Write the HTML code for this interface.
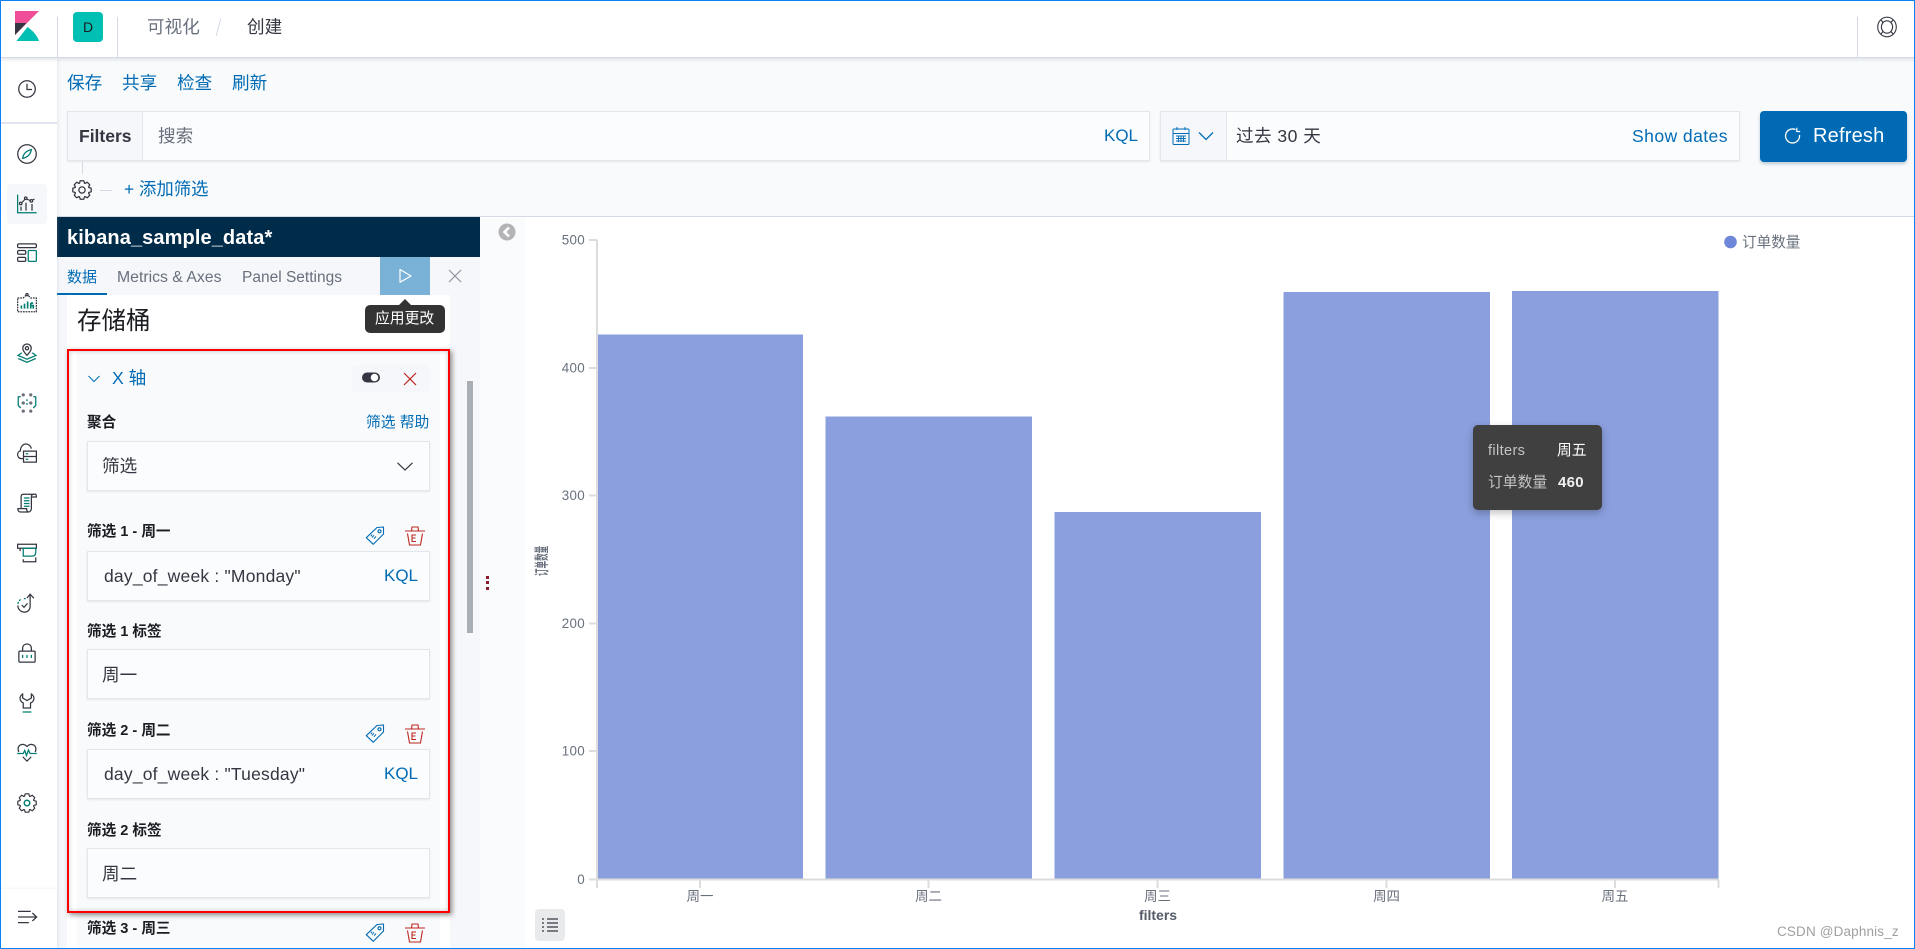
<!DOCTYPE html>
<html lang="zh">
<head>
<meta charset="utf-8">
<title>可视化 - 创建</title>
<style>
*{box-sizing:border-box}
html,body{margin:0;padding:0;width:1915px;height:949px;overflow:hidden;background:#fff;font-family:"Liberation Sans","Noto Sans CJK SC",sans-serif;color:#343741}
.a{position:absolute}
.t{position:absolute;white-space:nowrap;line-height:24px;height:24px}
.blue{color:#006bb4}
.b{font-weight:700}
.lbl{font-size:14.6px;font-weight:700;color:#1a1c21}
.inp{position:absolute;left:87px;width:343px;background:#fbfcfd;border:1px solid #e3e6ec;box-shadow:0 1px 2px rgba(0,0,0,.07)}
.i{position:absolute;left:17px;width:20px;height:20px;fill:none;stroke:#343741;stroke-width:1}
.g{stroke:#017d73}
svg{overflow:visible}
</style>
</head>
<body>
<!-- top bar backgrounds -->
<div class="a" style="left:0;top:0;width:1915px;height:58px;background:#fff;border-bottom:1px solid #d3dae6;box-shadow:0 2px 3px rgba(152,162,179,.25);z-index:3"></div>
<div class="a" style="left:57px;top:58px;width:1858px;height:159px;background:#f9fafc;border-bottom:1px solid #d3dae6"></div>

<!-- header content -->
<div style="position:absolute;left:0;top:0;width:1915px;height:57px;z-index:4">
<svg class="a" style="left:15px;top:11px" width="24" height="30" viewBox="0 0 24 30">
<polygon points="0,0 24,0 0,24" fill="#f04e98"/>
<polygon points="0,12 11.500,12 0,24" fill="#343741"/>
<path d="M1.500,30 L12.500,16 C17,19 22,24 24,30 Z" fill="#00bfb3"/>
</svg>
<div class="a" style="left:57px;top:17px;width:1px;height:40px;background:#d3dae6"></div>
<div class="a" style="left:117px;top:17px;width:1px;height:40px;background:#d3dae6"></div>
<div class="a" style="left:73px;top:12px;width:30px;height:30px;background:#00bfb3;border-radius:4px;color:#1a1c21;font-size:14px;line-height:30px;text-align:center">D</div>
<div class="t" style="left:147px;top:15px;font-size:17.6px;color:#69707d">可视化</div>
<div class="a" style="left:218px;top:18px;width:1px;height:18px;background:#d3dae6;transform:rotate(15deg)"></div>
<div class="t" style="left:247px;top:15px;font-size:17.6px;color:#343741">创建</div>
<div class="a" style="left:1857px;top:17px;width:1px;height:40px;background:#d3dae6"></div>
<svg class="a" style="left:1877px;top:16px;fill:none;stroke:#343741;stroke-width:1.1" width="20" height="22" viewBox="0 0 20 22">
<ellipse cx="10" cy="11" rx="9.300" ry="9.800"/><ellipse cx="10" cy="11" rx="5.600" ry="6.200"/>
<path d="M4,4 L6,6.500 M16,4 L14,6.500 M4,18 L6,15.500 M16,18 L14,15.500"/>
</svg>
</div>

<!-- nav links -->
<div class="t blue" style="left:67px;top:71px;font-size:17.6px">保存</div>
<div class="t blue" style="left:122px;top:71px;font-size:17.6px">共享</div>
<div class="t blue" style="left:177px;top:71px;font-size:17.6px">检查</div>
<div class="t blue" style="left:232px;top:71px;font-size:17.6px">刷新</div>

<!-- search -->
<div class="a" style="left:67px;top:111px;width:1083px;height:50px;background:#fbfcfd;border:1px solid #e3e6ec;box-shadow:0 1px 2px rgba(0,0,0,.07)"></div>
<div class="a" style="left:68px;top:112px;width:75px;height:48px;background:#f5f7fa;border-right:1px solid #e3e6ec"></div>
<div class="t b" style="left:79px;top:124px;font-size:17.5px;color:#343741">Filters</div>
<div class="t" style="left:158px;top:124px;font-size:17.6px;color:#69707d">搜索</div>
<div class="t blue" style="left:1104px;top:124px;font-size:17px">KQL</div>

<!-- date -->
<div class="a" style="left:1160px;top:111px;width:580px;height:50px;background:#fbfcfd;border:1px solid #e3e6ec;box-shadow:0 1px 2px rgba(0,0,0,.07)"></div>
<div class="a" style="left:1161px;top:112px;width:66px;height:48px;background:#f5f7fa;border-right:1px solid #e3e6ec"></div>
<svg class="a" style="left:1172px;top:126px;fill:none;stroke:#006bb4;stroke-width:1" width="18" height="20" viewBox="0 0 18 20">
<rect x="1" y="3" width="16" height="15.500" rx="1"/><path d="M1,7.500H17M5,1V4M13,1V4"/>
<path d="M4,10H14M4,12.500H14M4,15H14M6.500,9.500V16M9,9.500V16M11.500,9.500V16" stroke-width=".9"/>
</svg>
<svg class="a" style="left:1198px;top:131px;fill:none;stroke:#006bb4;stroke-width:1.3" width="16" height="10" viewBox="0 0 16 10"><path d="M1,1.500L8,8.500L15,1.500"/></svg>
<div class="t" style="left:1236px;top:124px;font-size:17.600px;color:#343741;letter-spacing:.45px">过去 30 天</div>
<div class="t blue" style="left:1632px;top:124px;font-size:17.600px;letter-spacing:.4px">Show dates</div>

<!-- refresh -->
<div class="a" style="left:1760px;top:111px;width:147px;height:51px;background:#006bb4;border-radius:4px;box-shadow:0 2px 3px rgba(0,60,100,.25)"></div>
<svg class="a" style="left:1784px;top:127px;fill:none;stroke:#fff;stroke-width:1.3" width="18" height="18" viewBox="0 0 18 18"><path d="M11.500,2.600A7,7 0 1 0 15.500,8"/><path d="M12.800,.8V4.500H16.200" stroke-width="1.2"/></svg>
<div class="t" style="left:1813px;top:124px;font-size:20px;color:#fff;letter-spacing:.2px">Refresh</div>

<!-- filter row -->
<div class="a" style="left:82px;top:161px;width:1px;height:13px;background:#d3dae6"></div>
<svg class="a" style="left:72px;top:180px;fill:none;stroke:#343741;stroke-width:1" width="20" height="20" viewBox="0 0 16 16">
<polygon points="15.360,9.430 13.450,9.980 13.260,10.450 14.220,12.190 12.190,14.220 10.450,13.260 9.980,13.450 9.430,15.360 6.570,15.360 6.020,13.450 5.550,13.260 3.810,14.220 1.780,12.190 2.740,10.450 2.550,9.980 .64,9.430 .64,6.570 2.550,6.020 2.740,5.550 1.780,3.810 3.810,1.780 5.550,2.740 6.020,2.550 6.570,.64 9.430,.64 9.980,2.550 10.450,2.740 12.190,1.780 14.220,3.810 13.260,5.550 13.450,6.020 15.360,6.570" stroke-linejoin="round"/><circle cx="8" cy="8" r="2.500"/>
</svg>
<div class="a" style="left:100px;top:190px;width:12px;height:1px;background:#d3dae6"></div>
<div class="t blue" style="left:124px;top:177px;font-size:17.400px">+ 添加筛选</div>

<!-- sidebar -->
<div class="a" style="left:1px;top:58px;width:56px;height:891px;background:#fff;box-shadow:1px 0 3px rgba(152,162,179,.22);z-index:2"></div>
<div style="position:absolute;left:0;top:0;z-index:3">
<div class="a" style="left:1px;top:122px;width:56px;height:2px;background:#dfe4ee"></div>
<div class="a" style="left:7px;top:184px;width:40px;height:40px;background:#f5f7fa;border-radius:4px"></div>
<div class="a" style="left:1px;top:889px;width:56px;height:59px;background:#fff;box-shadow:0 -1px 2px rgba(152,162,179,.12)"></div>

<svg class="i" style="top:79px" viewBox="0 0 16 16"><circle cx="8" cy="8" r="6.600"/><path d="M8,3.800V8.400H12"/></svg>
<svg class="i" style="top:144px" viewBox="0 0 16 16"><circle cx="8" cy="8" r="7.400"/><path d="M11.500,4.500C11,7.500 9,10.500 4.500,11.500C5,8 7,5.500 11.500,4.500Z" class="g"/></svg>
<svg class="i" style="top:194px" viewBox="0 0 16 16"><path class="g" d="M.5,.5V15H15.700"/><path d="M3,7.800L7,3.600L11,5.500L14,4" stroke-width=".9"/><circle cx="3" cy="7.600" r="1" fill="#fff"/><circle cx="7" cy="3.400" r="1" fill="#fff"/><circle cx="11.500" cy="5.500" r="1" fill="#fff"/><path d="M3.200,10V13.300M7.200,7V13.300M12,8V13.300"/></svg>
<svg class="i" style="top:243px" viewBox="0 0 16 16"><rect x=".5" y=".7" width="15" height="3" rx="1"/><rect x=".5" y="6" width="6.500" height="3" rx="1"/><rect x=".5" y="11.500" width="6.500" height="3.200" rx="1"/><rect class="g" x="9" y="6" width="6.500" height="8.700" rx=".8"/></svg>
<svg class="i" style="top:293px" viewBox="0 0 16 16"><path d="M.5,4H5L8,1L11,4H15.500V15H.5Z" stroke-dasharray="1.400 .7"/><circle cx="8" cy="1.300" r=".9" fill="#fff"/><path class="g" d="M3.500,12.500V10M6,12.500V8.500M8.500,12.500V6.800M11,12.500V8M13,12.500V10H11M13,8H11" stroke-width="1.300"/></svg>
<svg class="i" style="top:343px" viewBox="0 0 16 16"><path d="M8,9.800C6,7.800 4.600,6.200 4.600,4.200A3.400,3.400 0 0 1 11.400,4.200C11.400,6.200 10,7.800 8,9.800Z"/><circle cx="8" cy="4.200" r="1.300"/><path class="g" d="M3.800,7.800L.8,10L8,13L15.200,10L12.200,7.800M1,12.400L8,15.500L15,12.400"/></svg>
<svg class="i" style="top:393px" viewBox="0 0 16 16"><g fill="#6b707b" stroke="none"><circle cx="5" cy="1.500" r="1.300"/><circle cx="11" cy="1.500" r="1.300"/><circle cx="5" cy="8" r="1.300"/><circle cx="11" cy="8" r="1.300"/><circle cx="5" cy="14.500" r="1.300"/><circle cx="11" cy="14.500" r="1.300"/></g><path class="g" d="M3,3H1V10L3,12M13,3H15V10L13,12"/><path class="g" d="M8,5V10" stroke-dasharray="1.500 1.500"/></svg>
<svg class="i" style="top:443px" viewBox="0 0 16 16"><path d="M5,12.500H3.500C1.500,12.500 .5,10.800 .5,9.200C.5,7.500 1.700,6.500 2.700,6.300C2.700,3 5,.8 7,.8C9.200,.8 11,2.300 11.500,4.500"/><rect x="5.200" y="6.500" width="10.300" height="8.800"/><path d="M5.200,10.800H15.500"/><path class="g" d="M7,8.600H9M7,13H9"/></svg>
<svg class="i" style="top:493px" viewBox="0 0 16 16"><path d="M15.500,1H5C3.800,1 3.300,2 3.300,3V12.500M3.300,12.500H.7C.7,14.200 1.500,15.200 3,15.200H9.200C10.500,15.200 11.500,14 11.500,12.500V3C11.500,2 12,1 13.500,1H14.500C15.200,1 15.500,1.700 15.500,3.200H12M3.300,12.500H7.700C7.700,14 8.300,15 9.300,15.200"/><path class="g" d="M5.500,4H10M5.500,6.200H10M5.500,8.400H10M5.500,10.600H10"/></svg>
<svg class="i" style="top:543px" viewBox="0 0 16 16"><path d="M.5,1H15.500V4.200H.5ZM2.500,4.200V6.500"/><path class="g" d="M5,4.200H15V7.500C15,9.500 13.800,10.500 12,10.500H5Z"/><path d="M5,13V15H15V11.500"/></svg>
<svg class="i" style="top:593px" viewBox="0 0 16 16"><path d="M10.500,1.500L10.500,10.500C10.500,13.500 8.500,15.300 6,15.300C3,15.300 .7,13 .7,10"/><path d="M8,4L10.500,1L13.500,4.200"/><path class="g" d="M.7,8.800C1,7 2.200,5.300 3.500,4.900" stroke-dasharray="1.700 1"/><path class="g" d="M5.500,4.500H7"/><path d="M3.800,9.600L5.600,11.500L8.400,8.300"/></svg>
<svg class="i" style="top:643px" viewBox="0 0 16 16"><path d="M4.500,6.500V4.500C4.500,2 6,.8 8,.8C10,.8 11.500,2 11.500,4.500V6.500"/><rect x="1.500" y="6.500" width="13" height="8.800" rx=".8"/><path class="g" d="M4.500,9.500V12M8,9.500V12M11.500,9.500V12"/></svg>
<svg class="i" style="top:693px" viewBox="0 0 16 16"><path d="M4.500,.8C3,1.800 2.200,3.300 2.500,5C2.800,6.500 4,7.500 5,8V12H10.800V8C12,7.500 13.200,6.500 13.500,5C13.800,3.300 13,1.800 11.500,.8V4L8,6L4.500,4Z"/><path class="g" d="M4.500,15.200H11.500"/></svg>
<svg class="i" style="top:743px" viewBox="0 0 16 16"><path d="M1.500,7.200C.5,5.500 .6,3 2.300,1.800C4.300,.4 6.600,1.200 8,2.800C9.400,1.200 11.700,.4 13.700,1.800C15.400,3 15.500,5.500 14.500,7.200"/><path class="g" d="M.2,8.400H5L6.200,6L7.600,10L9.200,5.600L10.400,8.400H15.800"/><path d="M4.600,11L8,14.500L11.400,11"/></svg>
<svg class="i" style="top:793px;stroke-width:.95" viewBox="0 0 16 16"><polygon points="15.360,9.430 13.450,9.980 13.260,10.450 14.220,12.190 12.190,14.220 10.450,13.260 9.980,13.450 9.430,15.360 6.570,15.360 6.020,13.450 5.550,13.260 3.810,14.220 1.780,12.190 2.740,10.450 2.550,9.980 .64,9.430 .64,6.570 2.550,6.020 2.740,5.550 1.780,3.810 3.810,1.780 5.550,2.740 6.020,2.550 6.570,.64 9.430,.64 9.980,2.550 10.450,2.740 12.190,1.780 14.220,3.810 13.260,5.550 13.450,6.020 15.360,6.570" stroke-linejoin="round"/><circle class="g" cx="8" cy="8" r="2.200" stroke-width="1.200"/></svg>
<svg class="i" style="top:907px" viewBox="0 0 16 16"><path d="M.8,3.500H11M.8,8H15.500M.8,12.500H9.500M12.300,4.800L15.700,8L12.300,11.200"/></svg>
</div>

<!-- left panel -->
<div class="a" style="left:57px;top:217px;width:423px;height:732px;background:#f5f7fa"></div>
<div class="a" style="left:480px;top:218px;width:45px;height:731px;background:#fafbfd"></div>
<div class="a" style="left:57px;top:217px;width:423px;height:40px;background:#002b49"></div>
<div class="t" style="left:67px;top:226px;font-size:20px;font-weight:700;color:#fff;letter-spacing:.1px">kibana_sample_data*</div>
<div class="t blue" style="left:67px;top:265.500px;font-size:15px">数据</div>
<div class="a" style="left:57px;top:293px;width:50px;height:2px;background:#006bb4"></div>
<div class="t" style="left:117px;top:266px;font-size:15.800px;color:#69707d">Metrics &amp; Axes</div>
<div class="t" style="left:242px;top:266px;font-size:15.500px;color:#69707d">Panel Settings</div>
<div class="a" style="left:380px;top:257px;width:50px;height:38px;background:#7ab1d7"></div>
<svg class="a" style="left:398px;top:268px;fill:none;stroke:#fff;stroke-width:1.2" width="15" height="16" viewBox="0 0 15 16"><path d="M2,1.500V14.200L13,8Z" stroke-linejoin="round"/></svg>
<svg class="a" style="left:449px;top:270px;fill:none;stroke:#8e939c;stroke-width:1.2" width="12" height="12" viewBox="0 0 12 12"><path d="M0,0L12,12M12,0L0,12"/></svg>

<div class="a" style="left:67px;top:295px;width:383px;height:654px;background:#fff"></div>
<div class="a" style="left:77px;top:349px;width:363px;height:600px;background:#f9fafc"></div>
<div class="t" style="left:77px;top:310px;font-size:24.500px;color:#1a1c21">存储桶</div>

<!-- scrollbar -->
<div class="a" style="left:467px;top:381px;width:6px;height:252px;background:#a9aeb4"></div>

<!-- tooltip -->
<div class="a" style="left:365px;top:305px;width:80px;height:28px;background:#333;border-radius:5px;z-index:6"></div>
<div class="a" style="left:399px;top:299px;width:0;height:0;border-left:6px solid transparent;border-right:6px solid transparent;border-bottom:6px solid #333;z-index:6"></div>
<div class="t" style="left:375px;top:307px;font-size:14.800px;color:#fff;z-index:7">应用更改</div>

<!-- bucket content -->
<svg class="a" style="left:88px;top:375px;fill:none;stroke:#006bb4;stroke-width:1" width="12" height="8" viewBox="0 0 12 8"><path d="M.5,1L6,6.500L11.500,1"/></svg>
<div class="t blue" style="left:112px;top:365.500px;font-size:17.600px">X 轴</div>
<div class="a" style="left:352px;top:365px;width:78px;height:27px;background:#f5f7fa;border-radius:4px"></div>
<svg class="a" style="left:362px;top:372px" width="18" height="11" viewBox="0 0 18 11"><rect x="0" y=".5" width="18" height="10" rx="5" fill="#343741"/><circle cx="12.500" cy="5.500" r="3.800" fill="#fff"/></svg>
<svg class="a" style="left:404px;top:373px;fill:none;stroke:#bd271e;stroke-width:1.2" width="12" height="12" viewBox="0 0 12 12"><path d="M0,0L12,12M12,0L0,12"/></svg>

<div class="t lbl" style="left:87px;top:411px">聚合</div>
<div class="t blue" style="left:366px;top:411px;font-size:14.800px">筛选 帮助</div>
<div class="inp" style="top:441px;height:50px"></div>
<div class="t" style="left:102px;top:454px;font-size:17.600px">筛选</div>
<svg class="a" style="left:397px;top:462px;fill:none;stroke:#343741;stroke-width:1.2" width="16" height="9" viewBox="0 0 16 9"><path d="M.5,.8L8,8L15.500,.8"/></svg>

<div class="t lbl" style="left:87px;top:520px">筛选 1 - 周一</div>
<svg class="a" style="left:365px;top:526px;fill:none;stroke:#006bb4;stroke-width:1.1" width="20" height="20" viewBox="0 0 20 20"><path d="M12,1.500L18.500,1V8L8.300,18.300L1.300,11.700Z" stroke-linejoin="round"/><circle cx="14.500" cy="5.300" r="1.500"/><path d="M7,11.500L9,9.300M9,12.700L11,10.500M5.800,10.200L7.200,8.600" stroke-width="1"/></svg>
<svg class="a" style="left:405px;top:526px;fill:none;stroke:#bd271e;stroke-width:1.1" width="20" height="20" viewBox="0 0 20 20"><path d="M0,5H20M6.500,5L7,1H13L13.500,5M2.500,7.500L4.500,19H15.500L17.500,7.500"/><path d="M11,9H7V15.500H11M7,12H10.500"/></svg>
<div class="inp" style="top:551px;height:50px"></div>
<div class="t" style="left:104px;top:564px;font-size:17.500px;letter-spacing:.2px">day_of_week : "Monday"</div>
<div class="t blue" style="left:384px;top:564px;font-size:17px">KQL</div>

<div class="t lbl" style="left:87px;top:620px">筛选 1 标签</div>
<div class="inp" style="top:649px;height:50px"></div>
<div class="t" style="left:102px;top:663px;font-size:17.600px">周一</div>

<div class="t lbl" style="left:87px;top:719px">筛选 2 - 周二</div>
<svg class="a" style="left:365px;top:724px;fill:none;stroke:#006bb4;stroke-width:1.1" width="20" height="20" viewBox="0 0 20 20"><path d="M12,1.500L18.500,1V8L8.300,18.300L1.300,11.700Z" stroke-linejoin="round"/><circle cx="14.500" cy="5.300" r="1.500"/><path d="M7,11.500L9,9.300M9,12.700L11,10.500M5.800,10.200L7.200,8.600" stroke-width="1"/></svg>
<svg class="a" style="left:405px;top:724px;fill:none;stroke:#bd271e;stroke-width:1.1" width="20" height="20" viewBox="0 0 20 20"><path d="M0,5H20M6.500,5L7,1H13L13.500,5M2.500,7.500L4.500,19H15.500L17.500,7.500"/><path d="M11,9H7V15.500H11M7,12H10.500"/></svg>
<div class="inp" style="top:749px;height:50px"></div>
<div class="t" style="left:104px;top:762px;font-size:17.500px;letter-spacing:.2px">day_of_week : "Tuesday"</div>
<div class="t blue" style="left:384px;top:762px;font-size:17px">KQL</div>

<div class="t lbl" style="left:87px;top:819px">筛选 2 标签</div>
<div class="inp" style="top:848px;height:50px"></div>
<div class="t" style="left:102px;top:862px;font-size:17.600px">周二</div>

<div class="a" style="left:67px;top:349px;width:383px;height:564px;border:2px solid #f00;box-shadow:2px 2px 5px rgba(0,0,0,.45),inset 0 0 5px rgba(0,0,0,.22);z-index:5"></div>

<div class="t lbl" style="left:87px;top:917px">筛选 3 - 周三</div>
<svg class="a" style="left:365px;top:923px;fill:none;stroke:#006bb4;stroke-width:1.1" width="20" height="20" viewBox="0 0 20 20"><path d="M12,1.500L18.500,1V8L8.300,18.300L1.300,11.700Z" stroke-linejoin="round"/><circle cx="14.500" cy="5.300" r="1.500"/><path d="M7,11.500L9,9.300M9,12.700L11,10.500M5.800,10.200L7.200,8.600" stroke-width="1"/></svg>
<svg class="a" style="left:405px;top:923px;fill:none;stroke:#bd271e;stroke-width:1.1" width="20" height="20" viewBox="0 0 20 20"><path d="M0,5H20M6.500,5L7,1H13L13.500,5M2.500,7.500L4.500,19H15.500L17.500,7.500"/><path d="M11,9H7V15.500H11M7,12H10.500"/></svg>

<!-- divider handle -->
<div class="a" style="left:486px;top:576px;width:2.500px;height:2.500px;background:#8b1a2b"></div>
<div class="a" style="left:486px;top:581px;width:2.500px;height:2.500px;background:#8b1a2b"></div>
<div class="a" style="left:486px;top:587px;width:2.500px;height:2.500px;background:#8b1a2b"></div>

<!-- collapse -->
<svg class="a" style="left:498px;top:223px" width="18" height="18" viewBox="0 0 18 18"><circle cx="9" cy="9" r="8.500" fill="#b4b4b6"/><path d="M11,4.500L6.500,9L11,13.500" fill="none" stroke="#fff" stroke-width="2.600"/></svg>

<!-- chart -->
<svg class="a" style="left:0;top:0" width="1915" height="949" viewBox="0 0 1915 949" font-family="'Liberation Sans','Noto Sans CJK SC',sans-serif">
<g fill="#8b9fde">
<rect x="597" y="334.500" width="206" height="544.500"/>
<rect x="825.500" y="416.500" width="206.500" height="462.500"/>
<rect x="1054.500" y="512" width="206.500" height="367"/>
<rect x="1283.500" y="292" width="206.500" height="587"/>
<rect x="1512" y="291" width="206.500" height="588"/>
</g>
<g stroke="#dcdcdc" stroke-width="2" fill="none">
<path d="M597,240V888M589,240H597M589,368H597M589,495.500H597M589,623.500H597M589,751H597M589,879.500H1719"/>
<path d="M700,880V888M928.500,880V888M1157.500,880V888M1386.500,880V888M1615,880V888M1718.500,880V888"/>
</g>
<g fill="#69707d" font-size="13.400" text-anchor="end" letter-spacing=".3">
<text x="585" y="244.500">500</text>
<text x="585" y="372.500">400</text>
<text x="585" y="500">300</text>
<text x="585" y="628">200</text>
<text x="585" y="755.500">100</text>
<text x="585" y="884">0</text>
</g>
<g fill="#69707d" font-size="13.400" text-anchor="middle">
<text x="700" y="901">周一</text>
<text x="928.500" y="901">周二</text>
<text x="1157.500" y="901">周三</text>
<text x="1386.500" y="901">周四</text>
<text x="1615" y="901">周五</text>
</g>
<text x="1158" y="920" fill="#545b69" font-size="14" font-weight="700" text-anchor="middle">filters</text>
<text transform="translate(547,576) rotate(-90) scale(.52,1)" fill="#69707d" font-size="14.500" font-weight="700">订单数量</text>
<circle cx="1730.500" cy="242" r="6.300" fill="#6f87d8"/>
<text x="1742" y="247" fill="#69707d" font-size="14.600">订单数量</text>
</svg>

<!-- legend toggle -->
<div class="a" style="left:535px;top:909px;width:30px;height:32px;background:#e9eaec;border-radius:4px"></div>
<svg class="a" style="left:542px;top:918px;fill:none;stroke:#343741;stroke-width:1.2" width="16" height="14" viewBox="0 0 16 14"><path d="M0,1H2M5,1H16M0,5H2M5,5H16M0,9H2M5,9H16M0,13H2M5,13H16"/></svg>

<!-- chart tooltip -->
<div class="a" style="left:1473px;top:425px;width:129px;height:85px;background:#404040;border-radius:5px;box-shadow:0 3px 8px rgba(0,0,0,.25)"></div>
<div class="t" style="left:1488px;top:439px;font-size:14.600px;color:#c4c4c4;letter-spacing:.35px">filters</div>
<div class="t" style="left:1557px;top:439px;font-size:14.800px;color:#fff">周五</div>
<div class="t" style="left:1488px;top:471px;font-size:14.800px;color:#c4c4c4">订单数量</div>
<div class="t b" style="left:1558px;top:471px;font-size:15px;color:#f0f0f0;letter-spacing:.3px">460</div>

<!-- watermark -->
<div class="t" style="left:1777px;top:920px;font-size:13.500px;color:#a0a0a0;letter-spacing:.15px">CSDN @Daphnis_z</div>

<!-- frame -->
<div class="a" style="left:0;top:0;width:1915px;height:949px;border:1px solid #0a80f5;pointer-events:none;z-index:20"></div>
</body>
</html>
